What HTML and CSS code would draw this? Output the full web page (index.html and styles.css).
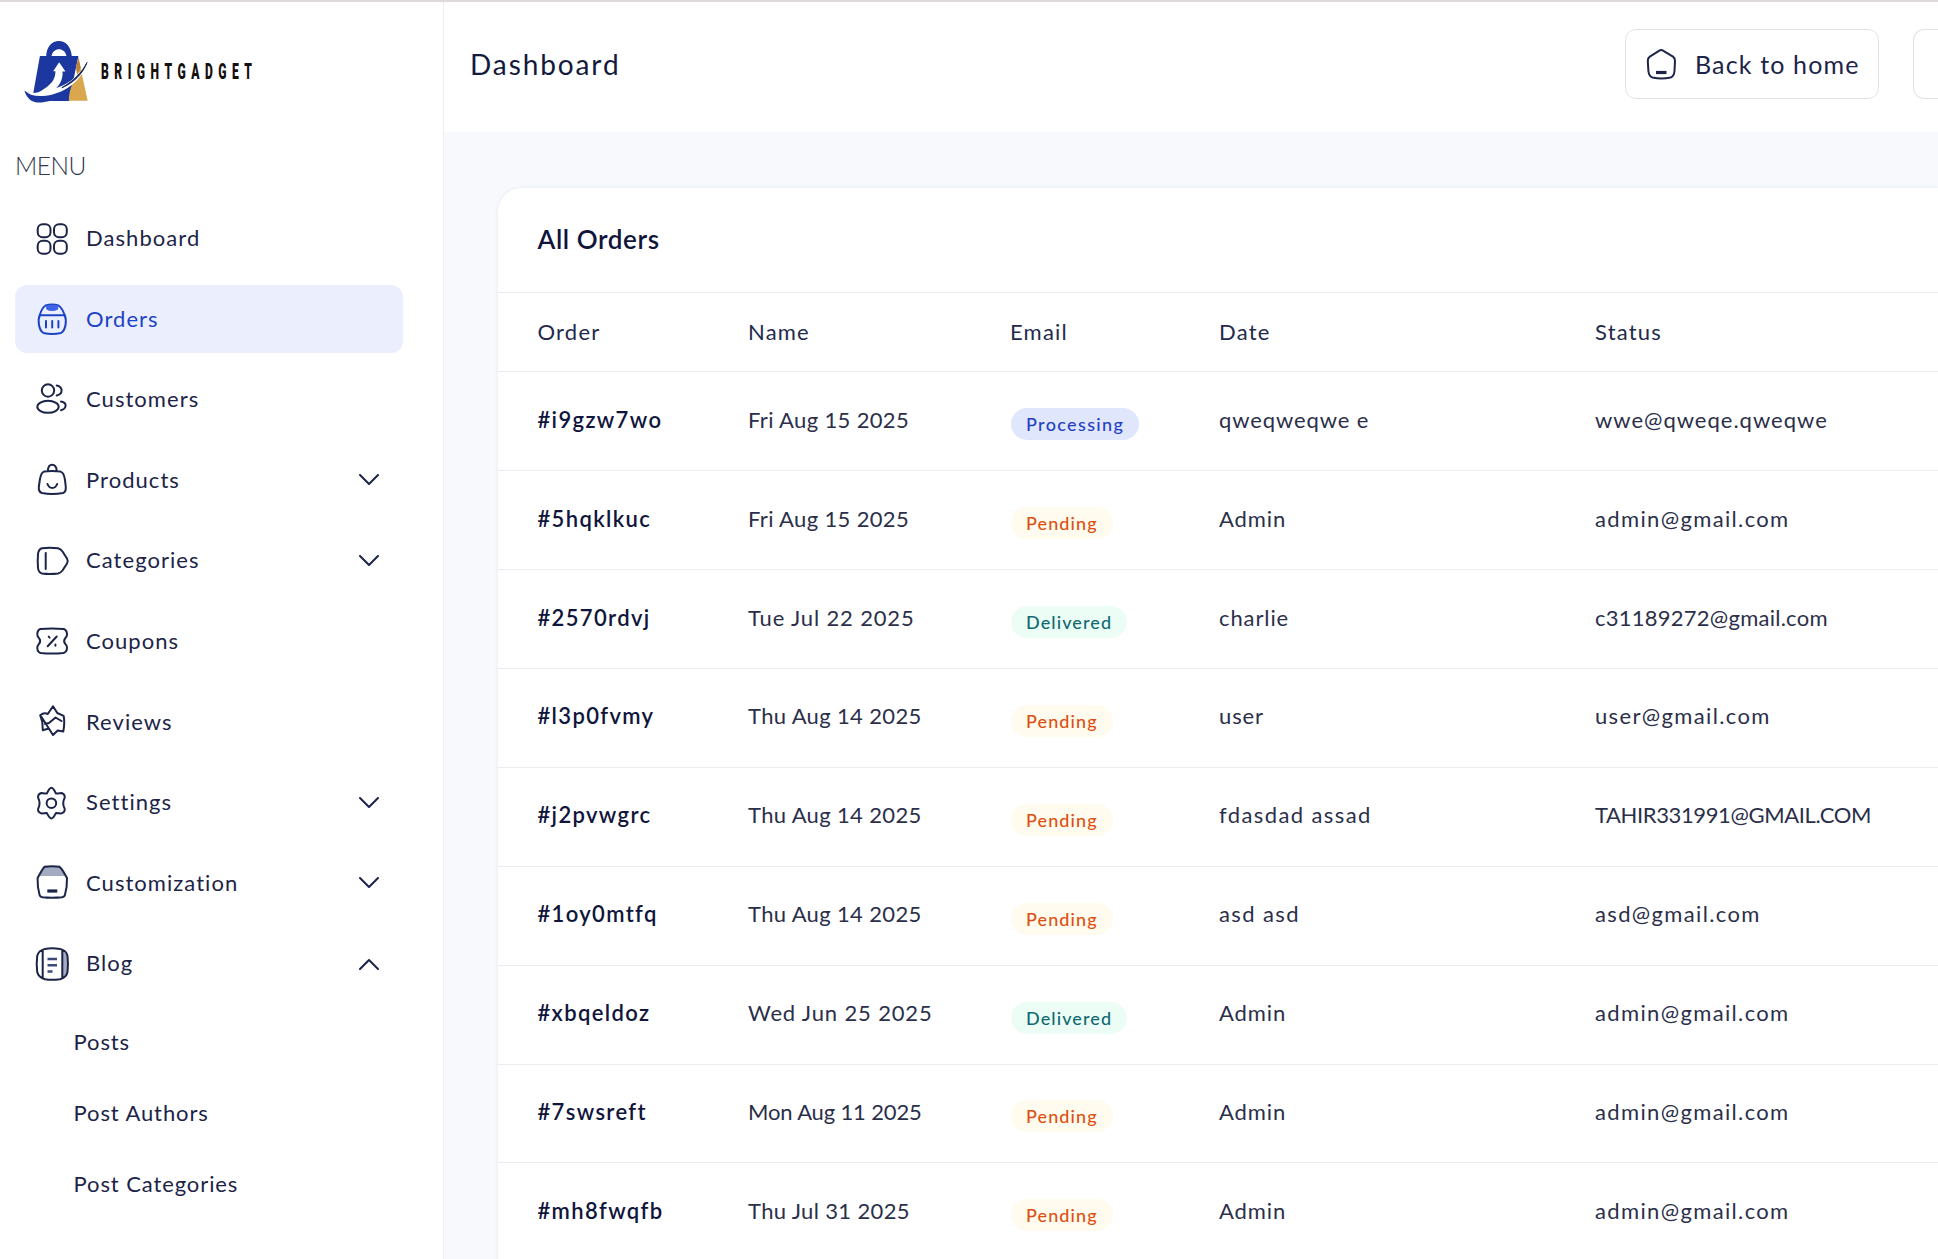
FILE: index.html
```html
<!DOCTYPE html>
<html lang="en">
<head>
<meta charset="utf-8">
<title>Dashboard</title>
<link rel="stylesheet" href="styles.css">
</head>
<body>
<div class="app">
  <aside class="sidebar">
    <div class="brand">
      <svg class="brand-mark" viewBox="72 118 196 194">
        <path d="M120 165H139C140 138 156 120 177 120S214 138 216 165H236L208 301H150C118 308 88 313 73 270C82 276 91 278 100 277Z" fill="#1c37a0"/>
        <path d="M155 165C160 138 195 138 200 165Z" fill="#fff"/>
        <path d="M236 172L264 300H207C208 262 224 236 236 216Z" fill="#d9a84e"/>
        <path d="M229 200L236 168L243 200L232 222Z" fill="#b98236"/>
        <path d="M78 272C98 282 118 276 133 264C156 248 166 236 167 211H160L178 184L197 212H188C190 232 182 250 169 262C210 250 240 220 262 185C250 232 206 270 158 281C120 290 92 286 78 272Z" fill="#fff"/>
        <path d="M262 185C248 220 222 246 186 261C222 240 246 216 262 185Z" fill="#14255f" stroke="#14255f" stroke-width="3"/>
      </svg>
      <span class="brand-name">BRIGHTGADGET</span>
    </div>
    <p class="menu-title">MENU</p>
    <nav class="nav">
      <a class="nav-item"><svg class="icon" viewBox="0 0 32 32"><rect x="1.7" y="1.2" width="12.8" height="13" rx="5"/><rect x="18" y="1.2" width="12.8" height="13" rx="5"/><rect x="1.7" y="17.8" width="12.8" height="13" rx="5"/><rect x="18" y="17.8" width="12.8" height="13" rx="5"/></svg><span>Dashboard</span></a>
      <a class="nav-item active"><svg class="icon" viewBox="0 0 32 32"><path d="M9.5 2.5Q16 .6 22.5 2.5Q26 4.500 28.600 12Q30.500 16 29.500 22Q28.500 28 25 30Q16 31.800 7.500 30Q4 28 3 22Q2 16 3.800 12Q6 4.500 9.500 2.500Z"/><path d="M4 12.200H28.500M10 18V24.500M16.200 18V24.500M22.400 18V24.500"/><path class="solid" d="M9.500 2.500Q16 1 22.500 2.500L22 6.500Q16 9.500 10.500 6.500Z"/></svg><span>Orders</span></a>
      <a class="nav-item"><svg class="icon" viewBox="0 0 32 32"><circle cx="12" cy="6.500" r="6.200"/><ellipse cx="12" cy="22.800" rx="10.700" ry="6"/><path d="M20.700 1.500Q25.600 2.600 25.600 6.500T20.700 11.500M25 17.600Q29.800 18.500 29.600 21.800T25 26.300"/></svg><span>Customers</span></a>
      <a class="nav-item"><svg class="icon" viewBox="0 0 32 32"><path d="M8 7.600Q16 6.400 24.500 7.600Q28 8.500 29 16L29.800 23Q30 28 27 29Q16 31 6 29Q2.500 28 2.800 23L3.800 16Q5 8.500 8 7.600ZM11.800 7Q12.200 .8 16.200 .8T20.800 7M11.500 20Q13 24 16.300 24T21.200 20"/></svg><span>Products</span><svg class="chevron" viewBox="0 0 20 12"><path d="M1 1L10 10L19 1"/></svg></a>
      <a class="nav-item"><svg class="icon" viewBox="0 0 32 32"><path d="M6 3.200Q14 2.200 22 3.200Q24.500 3.800 26.500 6.500L31 13.500Q32.500 16 31 18.500L26.500 25.500Q24.500 28 22 28.500Q14 29.500 6 28.500Q2.500 27.500 2 23Q1.400 16 2 9Q2.500 4.200 6 3.200ZM9.700 8V24"/></svg><span>Categories</span><svg class="chevron" viewBox="0 0 20 12"><path d="M1 1L10 10L19 1"/></svg></a>
      <a class="nav-item"><svg class="icon" viewBox="0 0 32 32"><path d="M4.500 4Q16 3 27.500 4Q31 5 31 9.500Q31 11.500 29.300 13Q27 16 29.300 19Q31 20.500 31 22.500Q31 27 27.500 28Q16 29 4.500 28Q1.300 27 1.300 22.500Q1.300 20.500 3 19Q5.300 16 3 13Q1.300 11.500 1.300 9.500Q1.300 5 4.500 4ZM11.700 21.300L20.700 11.500M12.700 11.500L13.600 12.800M19.400 19.500V20.700"/></svg><span>Coupons</span></a>
      <a class="nav-item"><svg class="icon" viewBox="0 0 32 32"><path d="M17 .2L21.300 7L27.600 9.800Q29 16 27.300 25.500L21.700 24.500L17 29L12.800 22.500L6.800 24.200L6.300 16L4.200 9.200Q8 6.200 11.800 8ZM5.500 11L17 29M9 18L13 17L19.500 11.500L25.500 15"/></svg><span>Reviews</span></a>
      <a class="nav-item"><svg class="icon" viewBox="0 0 32 32"><circle cx="15.400" cy="16.200" r="4.800"/><path d="M15.400 .8Q17.200 .8 20 6.600Q21.300 6.500 25.500 6Q29.500 7.500 28.600 11Q25.800 16.200 28.600 21.500Q29.500 25 25.500 26.400Q21.300 25.800 20 25.900Q17.200 31.600 15.400 31.600T10.800 25.900Q9.500 25.800 5.300 26.400Q1.300 25 2.200 21.500Q5 16.200 2.200 11Q1.300 7.500 5.300 6Q9.500 6.500 10.800 6.600Q13.600 .8 15.400 .8Z"/></svg><span>Settings</span><svg class="chevron" viewBox="0 0 20 12"><path d="M1 1L10 10L19 1"/></svg></a>
      <a class="nav-item"><svg class="icon" viewBox="0 0 32 32"><path class="shade" d="M9 -.3H23.500L30 9H2Z"/><path d="M8.500 -.2Q16 -1.200 23.500 -.2Q25 .8 27 4L31 11Q31.300 20 28.800 28.500Q28 30 26 30.300Q16 31.300 6.500 30.300Q4.500 30 3.700 28.500Q1.200 20 1.600 11L5.500 4Q7.500 .8 8.500 -.2Z"/><path class="dash" d="M11.300 24H21.300"/></svg><span>Customization</span><svg class="chevron" viewBox="0 0 20 12"><path d="M1 1L10 10L19 1"/></svg></a>
      <a class="nav-item"><svg class="icon" viewBox="0 0 32 32"><path class="shade" d="M26.500 2L31 7V25L26.500 30Z"/><path d="M9 .9Q16 -.3 24 .9Q30.500 2.500 31.500 8Q32.500 16 31.500 24Q30.500 29.500 24 31.200Q16 32.300 9 31.200Q2.500 29.500 1.200 24Q.2 16 1.200 8Q2.500 2.500 9 .9ZM6.700 2.500V29.500M26.300 2.500V29.500"/><path class="lines" d="M11.500 11H21M11.500 17.300H21M11.500 23.500H16.500"/></svg><span>Blog</span><svg class="chevron" viewBox="0 0 20 12"><path d="M1 11L10 2L19 11"/></svg></a>
    </nav>
    <nav class="subnav">
      <a>Posts</a>
      <a>Post Authors</a>
      <a>Post Categories</a>
    </nav>
  </aside>
  <div class="main">
    <header class="topbar">
      <h1>Dashboard</h1>
      <div class="actions">
        <a class="button"><svg class="icon" viewBox="0 0 32 32"><path d="M14 2.800Q16.200 1.400 18.400 2.800L28 8.600Q30 10 30 13L29.500 23Q29 28.500 25.500 29.500Q16.500 31.300 7.500 29.500Q4 28.500 3.400 23L2.800 13Q2.800 10 4.800 8.600Z"/><path class="dash" d="M11 24.500H21.500"/></svg><span>Back to home</span></a>
        <a class="button cut"></a>
      </div>
    </header>
    <section class="card">
      <h2>All Orders</h2>
      <div class="row head"><span>Order</span><span>Name</span><span>Email</span><span>Date</span><span>Status</span></div>
      <div class="row"><b>#i9gzw7wo</b><span>Fri Aug 15 2025</span><i class="badge processing">Processing</i><span class="name">qweqweqwe e</span><span class="mail mixed">wwe@qweqe.qweqwe</span></div>
      <div class="row"><b>#5hqklkuc</b><span>Fri Aug 15 2025</span><i class="badge pending">Pending</i><span class="name">Admin</span><span class="mail">admin@gmail.com</span></div>
      <div class="row"><b>#2570rdvj</b><span class="wide">Tue Jul 22 2025</span><i class="badge delivered">Delivered</i><span class="name">charlie</span><span class="mail digits">c31189272@gmail.com</span></div>
      <div class="row"><b>#l3p0fvmy</b><span>Thu Aug 14 2025</span><i class="badge pending">Pending</i><span class="name">user</span><span class="mail">user@gmail.com</span></div>
      <div class="row"><b>#j2pvwgrc</b><span>Thu Aug 14 2025</span><i class="badge pending">Pending</i><span class="name loose">fdasdad assad</span><span class="mail caps">TAHIR331991@GMAIL.COM</span></div>
      <div class="row"><b>#1oy0mtfq</b><span>Thu Aug 14 2025</span><i class="badge pending">Pending</i><span class="name loose">asd asd</span><span class="mail">asd@gmail.com</span></div>
      <div class="row"><b>#xbqeldoz</b><span class="wide">Wed Jun 25 2025</span><i class="badge delivered">Delivered</i><span class="name">Admin</span><span class="mail">admin@gmail.com</span></div>
      <div class="row"><b>#7swsreft</b><span class="tight">Mon Aug 11 2025</span><i class="badge pending">Pending</i><span class="name">Admin</span><span class="mail">admin@gmail.com</span></div>
      <div class="row"><b>#mh8fwqfb</b><span>Thu Jul 31 2025</span><i class="badge pending">Pending</i><span class="name">Admin</span><span class="mail">admin@gmail.com</span></div>
    </section>
  </div>
</div>
</body>
</html>
```
FILE: styles.css
```css
* { box-sizing: border-box; }

body {
  margin: 0;
  font-family: Lato, "Open Sans", sans-serif;
  font-size: 22px;
  color: #1c2448;
  background: #fff;
  overflow: hidden;
}

.app {
  display: flex;
  width: 1938px;
  height: 1259px;
  border-top: 2px solid #dedadc;
  overflow: hidden;
}

/* Sidebar */
.sidebar {
  flex: none;
  width: 444px;
  padding: 38px 40px 0 15px;
  border-right: 1px solid #eeeff3;
}

.brand {
  display: flex;
  align-items: center;
  height: 65px;
  padding-left: 9px;
}

.brand-mark { flex: none; width: 65px; height: 65px; }

.brand-name {
  width: 0;
  margin: 0 0 1px 12px;
  font: 900 22px/1 Roboto, sans-serif;
  letter-spacing: 10px;
  color: #15100c;
  white-space: nowrap;
  transform: scaleX(.55);
  transform-origin: left;
}

.menu-title {
  margin: 44px 0 0;
  font-size: 24.500px;
  line-height: 34px;
  font-weight: 300;
  letter-spacing: -.5px;
  color: #34374f;
}

.nav {
  display: flex;
  flex-direction: column;
  gap: 12.600px;
  margin-top: 21.500px;
}

.nav-item {
  display: flex;
  align-items: center;
  height: 68px;
  padding: 0 24px 0 21px;
  border-radius: 12px;
  letter-spacing: 1.050px;
}

.nav-item span { margin: 0 0 2px 18px; }
.nav-item.active { background: #ebeffd; color: #1d43c6; }

.icon {
  flex: none;
  width: 32px;
  height: 32px;
  fill: none;
  stroke: currentColor;
  stroke-width: 2;
  stroke-linecap: round;
  stroke-linejoin: round;
  overflow: visible;
}

.icon .shade { fill: #a3abc2; stroke: none; }
.icon .solid { fill: #3d63e6; stroke: none; }
.icon .dash { stroke-width: 3.200; stroke-linecap: butt; }
.icon .lines { stroke-width: 2.600; stroke-linecap: butt; stroke: #3c4a78; }

.chevron {
  width: 20px;
  height: 12px;
  margin-left: auto;
  fill: none;
  stroke: currentColor;
  stroke-width: 2;
  stroke-linecap: round;
  stroke-linejoin: round;
}

.subnav {
  display: flex;
  flex-direction: column;
  margin-top: 8px;
  padding-left: 58.500px;
  line-height: 71px;
  letter-spacing: .9px;
}

/* Main area */
.main {
  flex: 1;
  min-width: 0;
  background: #f7f9fc;
}

.topbar {
  display: flex;
  align-items: center;
  justify-content: space-between;
  height: 130px;
  padding: 0 0 6px 26px;
  background: #fff;
}

h1, h2 { margin: 0; }

h1 {
  font-size: 28px;
  font-weight: 400;
  letter-spacing: 1.900px;
  color: #131a3c;
}

.actions { display: flex; gap: 34px; }

.button {
  display: flex;
  align-items: center;
  width: 254px;
  height: 70px;
  padding-left: 19px;
  border: 1px solid #e2e3e8;
  border-radius: 11px;
  font-size: 25px;
  letter-spacing: 1.150px;
  white-space: nowrap;
}

.button span { margin-left: 18px; }

.button.cut {
  width: 25px;
  border-right: 0;
  border-radius: 11px 0 0 11px;
}

/* Orders table */
.card {
  height: 1100px;
  margin: 56px 0 0 54px;
  border-radius: 24px 0 0 0;
  background: #fff;
  box-shadow: 0 0 4px rgba(30, 50, 110, .08);
}

h2 {
  height: 105px;
  padding-left: 39.500px;
  border-bottom: 1px solid #ebecef;
  font-size: 26px;
  line-height: 102px;
  font-weight: 600;
  letter-spacing: .6px;
  color: #10153c;
}

.row {
  display: grid;
  grid-template-columns: 210.500px 262px 209px 376px 1fr;
  align-items: center;
  height: 98.900px;
  padding: 0 0 4px 39.500px;
  border-bottom: 1px solid #ebecef;
  color: #2b2f4a;
  white-space: nowrap;
  letter-spacing: .350px;
}

.row.head {
  height: 79.300px;
  padding-bottom: 2px;
  color: #232a4c;
  letter-spacing: 1.200px;
}

.row b {
  font-weight: 600;
  letter-spacing: 1.350px;
  color: #10153c;
}

.row .name { letter-spacing: .9px; }
.row .loose { letter-spacing: 1.400px; }
.row .mail { letter-spacing: 1.350px; }
.row .mixed { letter-spacing: 1px; }
.row .digits { letter-spacing: .250px; }
.row .caps { letter-spacing: -.380px; }
.row .wide { letter-spacing: .850px; }
.row .tight { letter-spacing: -.150px; }

.badge {
  justify-self: start;
  height: 32px;
  margin: 10px 0 0 1px;
  padding: 0 15px;
  border-radius: 16px;
  font: 500 18px/33px Lato, sans-serif;
  letter-spacing: 1.100px;
}

.processing { background: #e0e7fd; color: #2340c4; letter-spacing: 1.350px; }
.pending { background: #fffbee; color: #dd5012; }
.delivered { background: #ecfdf6; color: #0f6a72; }
```
